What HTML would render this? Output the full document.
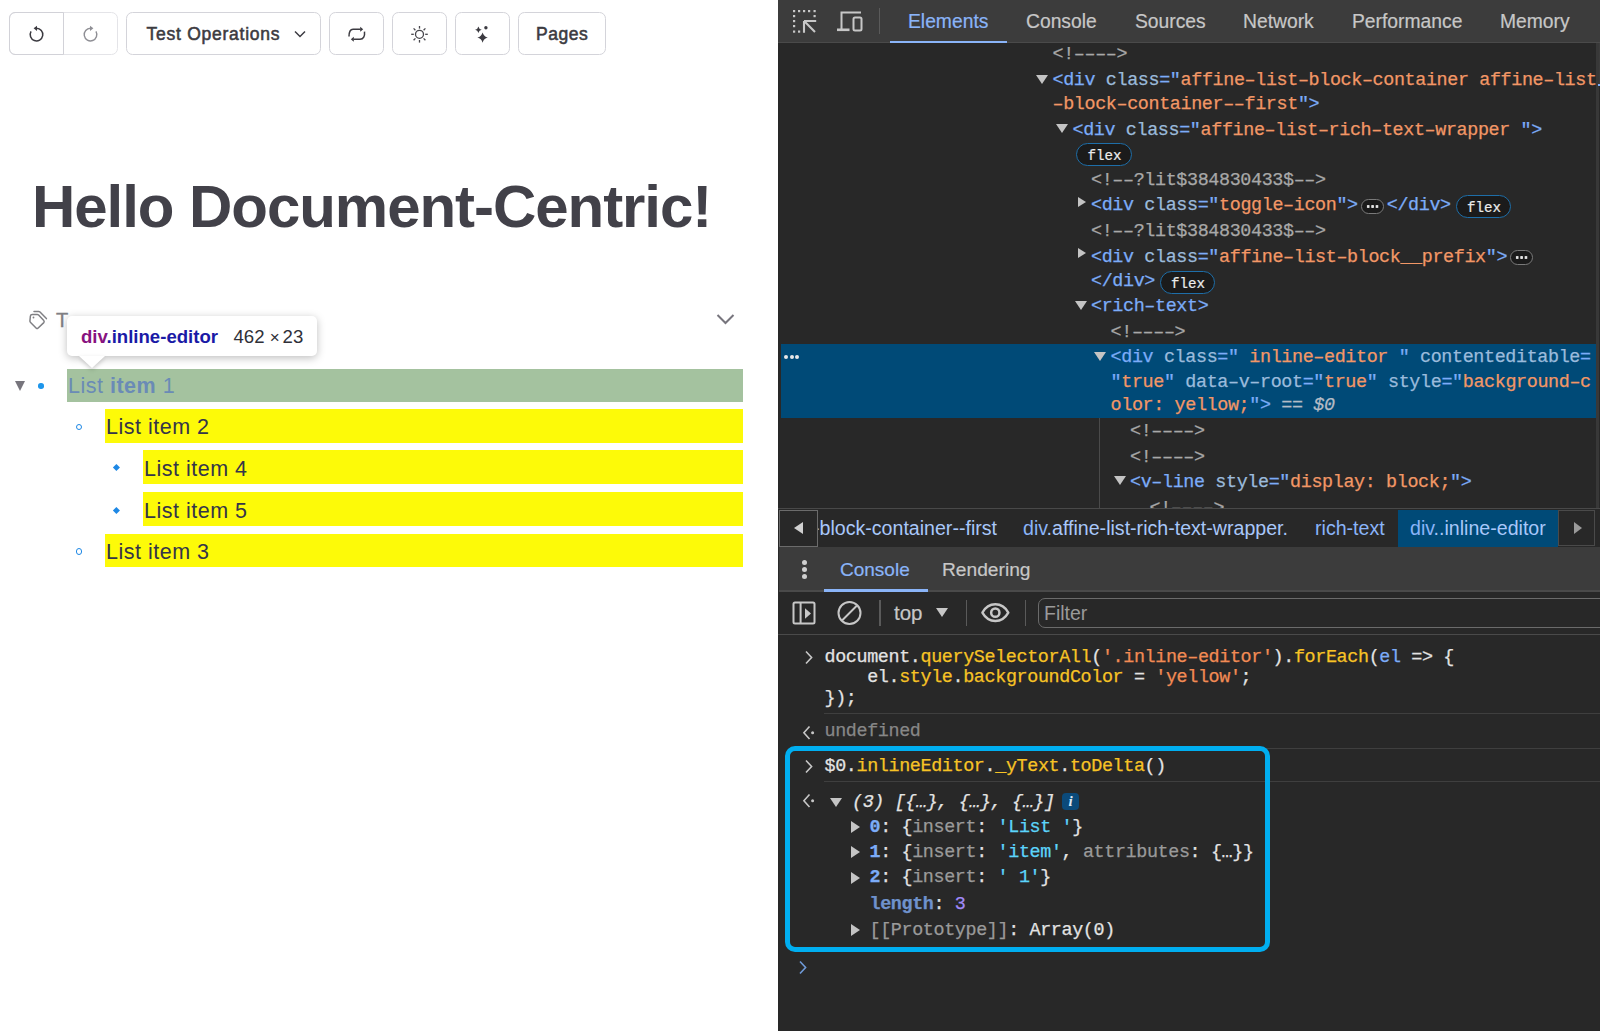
<!DOCTYPE html><html><head><meta charset="utf-8"><style>
*{margin:0;padding:0;box-sizing:border-box}
html,body{width:1600px;height:1031px;overflow:hidden;background:#fff}
body{position:relative;font-family:"Liberation Sans", sans-serif}
.abs{position:absolute}
.ml{position:absolute;font-family:"Liberation Mono", monospace;font-size:18.4px;letter-spacing:-0.368px;line-height:20px;white-space:pre;color:#e3e3e3;-webkit-text-stroke:0.25px currentColor}
.tg{color:#7cacf8} .an{color:#9bbbdc} .av{color:#f29766} .cm{color:#a8a8a8} .wt{color:#e3e3e3}
.yl{color:#f7c325} .or{color:#f28b54} .gy{color:#9a9a9a} .cy{color:#5cd5fb} .bl{color:#7cacf8} .ud{color:#878787} .sgy{color:#b4bcc6} .sgi{color:#b4bcc6;font-style:italic} .blb{color:#7cacf8;font-weight:bold} .lenc{color:#6f92cc;font-weight:bold} .pu{color:#a28bfa}
.btn{position:absolute;top:12px;height:43px;border:1.5px solid #d4d4da;border-radius:6.5px;background:#fff}
.tri-d{position:absolute;width:0;height:0;border-left:6.1px solid transparent;border-right:6.1px solid transparent;border-top:9.5px solid #c4c4c4}
.tri-r{position:absolute;width:0;height:0;border-top:5.6px solid transparent;border-bottom:5.6px solid transparent;border-left:8.8px solid #c4c4c4}
.badge{position:absolute;height:23px;border:1.8px solid #1e6ea8;border-radius:12px;background:#1b1b1b;font-family:"Liberation Mono", monospace;font-size:14.2px;line-height:21.4px;padding-top:1.5px;text-indent:1px;color:#ececec;text-align:center;-webkit-text-stroke:0.2px #ececec}
.sep{position:absolute;height:1px;background:#3f3f3f}
.li{position:absolute;font-family:"Liberation Sans", sans-serif;font-size:21.5px;letter-spacing:0.5px;color:#35343a;white-space:pre}
</style></head><body>
<div class="abs" style="left:0;top:0;width:778px;height:1031px;background:#fff"></div>
<div class="btn" style="left:9px;width:109px;border-color:#e4e4e8"></div><div class="abs" style="left:9px;top:12px;width:55px;height:43px;border:1.5px solid #d2d2d8;border-radius:6px 0 0 6px"></div><svg class="abs" style="left:26px;top:22px" width="24" height="24" viewBox="0 0 24 24"><path d="M5.04 9.45 A6.3 6.3 0 1 0 10.5 6.3" fill="none" stroke="#3b3a40" stroke-width="1.5"/><path d="M7.6 6.3 L11 3.7 L11 8.9 Z" fill="#3b3a40"/></svg><svg class="abs" style="left:80px;top:22px" width="24" height="24" viewBox="0 0 24 24"><path d="M15.96 9.45 A6.3 6.3 0 1 1 10.5 6.3" fill="none" stroke="#8f8f95" stroke-width="1.4"/><path d="M13.4 6.3 L10 3.7 L10 8.9 Z" fill="#8f8f95"/></svg><div class="btn" style="left:126px;width:195px"></div><div class="abs" style="left:146.5px;top:24px;font-size:17.5px;font-weight:normal;-webkit-text-stroke:0.55px #3c3b41;color:#3c3b41;letter-spacing:0.75px;white-space:pre">Test Operations</div><svg class="abs" style="left:293px;top:28.5px" width="14" height="10" viewBox="0 0 14 10"><path d="M2 2.5 L7 7.5 L12 2.5" fill="none" stroke="#3c3b41" stroke-width="1.5"/></svg><div class="btn" style="left:329px;width:55px"></div><svg class="abs" style="left:340px;top:18px" width="32" height="32" viewBox="0 0 32 32"><g fill="none" stroke="#3c3b41" stroke-width="1.5"><path d="M9 18.6 C9 14 10 11.3 13 11.3 H20.5"/><path d="M24.5 13.7 C25 18 23.5 21.3 20 21.3 H13.5"/></g><path d="M20.2 8.8 L23.2 11.3 L20.2 13.8 Z" fill="#3c3b41"/><path d="M13.8 18.8 L10.8 21.3 L13.8 23.8 Z" fill="#3c3b41"/></svg><div class="btn" style="left:392px;width:55px"></div><svg class="abs" style="left:404px;top:18px" width="32" height="32" viewBox="0 0 32 32"><circle cx="15.5" cy="16.3" r="4" fill="none" stroke="#46454b" stroke-width="1.3"/><g stroke="#46454b" stroke-width="1.3"><path d="M15.5 8 V10.6"/><path d="M15.5 22 V24.6"/><path d="M7.2 16.3 H9.8"/><path d="M21.2 16.3 H23.8"/><path d="M9.6 10.4 L11.4 12.2"/><path d="M19.6 20.4 L21.4 22.2"/><path d="M9.6 22.2 L11.4 20.4"/><path d="M19.6 12.2 L21.4 10.4"/></g></svg><div class="btn" style="left:455px;width:55px"></div><svg class="abs" style="left:466px;top:18px" width="32" height="32" viewBox="0 0 32 32"><path d="M16.6 14.400000000000002 Q17.74 18.46 21.8 19.6 Q17.74 20.74 16.6 24.8 Q15.46 20.74 11.400000000000002 19.6 Q15.46 18.46 16.6 14.400000000000002 Z" fill="#3c3b41"/><path d="M12.4 8.5 Q12.99 11.21 15.7 11.8 Q12.99 12.39 12.4 15.100000000000001 Q11.81 12.39 9.100000000000001 11.8 Q11.81 11.21 12.4 8.5 Z" fill="#3c3b41"/><circle cx="19.9" cy="9.8" r="1.7" fill="#3c3b41"/></svg><div class="btn" style="left:518px;width:88px"></div><div class="abs" style="left:536px;top:24px;font-size:17.5px;font-weight:normal;-webkit-text-stroke:0.55px #3c3b41;color:#3c3b41;letter-spacing:0.55px;white-space:pre">Pages</div><div class="abs" style="left:32px;top:172px;font-size:60px;font-weight:bold;color:#424149;letter-spacing:-1.05px;white-space:pre;line-height:70px">Hello Document-Centric!</div>
<svg class="abs" style="left:20px;top:300px" width="40" height="40" viewBox="0 0 40 40"><path d="M12.2 14.4 H17.2 Q18 14.4 18.6 15 L23.8 20.6 Q24.6 21.7 23.8 22.6 L17.9 28.2 Q17.1 28.9 16.3 28.2 L10.6 22.5 Q9.9 21.8 9.9 21 L10.4 16 Q10.6 14.4 12.2 14.4 Z" fill="none" stroke="#808084" stroke-width="1.5" stroke-linejoin="round"/><path d="M14 11.4 H18.6 Q19.4 11.4 20 12 L26.4 18.6" fill="none" stroke="#808084" stroke-width="1.5" stroke-linecap="round"/><circle cx="13.5" cy="17.5" r="0.9" fill="#808084"/></svg><div class="abs" style="left:56px;top:309px;font-size:20px;color:#808084;-webkit-text-stroke:0.35px #808084">T</div><svg class="abs" style="left:714px;top:310px" width="24" height="20" viewBox="0 0 24 20"><path d="M3.5 5 L11.5 13 L19.5 5" fill="none" stroke="#77757d" stroke-width="2"/></svg>
<div class="abs" style="left:67px;top:369px;width:676px;height:33px;background:#a4c29f"></div><div class="abs" style="left:105px;top:409px;width:638px;height:33.5px;background:#fdfa08"></div><div class="abs" style="left:143px;top:450px;width:600px;height:34px;background:#fdfa08"></div><div class="abs" style="left:143px;top:492px;width:600px;height:34px;background:#fdfa08"></div><div class="abs" style="left:105px;top:534px;width:638px;height:33px;background:#fdfa08"></div>
<div class="li" style="left:68px;top:374.0px;line-height:24px;color:#6a8bb6">List <b style="letter-spacing:0.5px">item</b> 1</div><div class="li" style="left:106px;top:415.2px;line-height:24px;color:#34344a">List item 2</div><div class="li" style="left:144px;top:456.5px;line-height:24px;color:#34344a">List item 4</div><div class="li" style="left:144px;top:498.5px;line-height:24px;color:#34344a">List item 5</div><div class="li" style="left:106px;top:539.5px;line-height:24px;color:#34344a">List item 3</div><div class="tri-d" style="left:15px;top:381px;border-left-width:5.5px;border-right-width:5.5px;border-top:10px solid #77757d"></div><div class="abs" style="left:38px;top:383px;width:5.5px;height:5.5px;border-radius:50%;background:#1e96eb"></div><div class="abs" style="left:75.5px;top:423.5px;width:6.5px;height:6.5px;border-radius:50%;border:1.4px solid #1e88e5"></div><div class="abs" style="left:75.5px;top:548.0px;width:6.5px;height:6.5px;border-radius:50%;border:1.4px solid #1e88e5"></div><div class="abs" style="left:114.35px;top:465.1px;width:4.8px;height:4.8px;transform:rotate(45deg);background:#1e88e5"></div><div class="abs" style="left:114.35px;top:507.6px;width:4.8px;height:4.8px;transform:rotate(45deg);background:#1e88e5"></div><div class="abs" style="left:67px;top:316px;width:250px;height:40px;background:#fff;border-radius:5px;box-shadow:0 2px 8px rgba(0,0,0,0.26)"></div><div class="abs" style="left:79px;top:355.5px;width:0;height:0;border-left:13.5px solid transparent;border-right:13.5px solid transparent;border-top:12.5px solid #fff;filter:drop-shadow(0 2px 2px rgba(0,0,0,0.2))"></div><div class="abs" style="left:81px;top:325px;font-size:18.6px;font-weight:bold;white-space:pre;line-height:24px"><span style="color:#881280">div</span><span style="color:#1a1aa6">.inline-editor</span></div><div class="abs" style="left:233.5px;top:325px;font-size:18.6px;color:#303038;white-space:pre;line-height:24px">462</div><div class="abs" style="left:269.8px;top:325.5px;font-size:17px;color:#303038;white-space:pre;line-height:24px">×</div><div class="abs" style="left:282.6px;top:325px;font-size:18.6px;color:#303038;white-space:pre;line-height:24px">23</div>
<div class="abs" style="left:778px;top:0;width:822px;height:1031px;background:#282828"></div>
<div class="abs" style="left:778px;top:0;width:822px;height:42px;background:#3c3c3c"></div><div class="abs" style="left:778px;top:42px;width:822px;height:1px;background:#4a4a4a"></div><div class="abs" style="left:890px;top:40.5px;width:117px;height:2.5px;background:#8ab4f8"></div><svg class="abs" style="left:790px;top:8px" width="30" height="28" viewBox="0 0 30 28"><g fill="#c7c7c7"><rect x="3" y="2" width="2.2" height="2.2"/><rect x="8" y="2" width="2.2" height="2.2"/><rect x="13" y="2" width="2.2" height="2.2"/><rect x="18" y="2" width="2.2" height="2.2"/><rect x="23.5" y="2" width="2.2" height="2.2"/><rect x="3" y="7" width="2.2" height="2.2"/><rect x="3" y="12" width="2.2" height="2.2"/><rect x="3" y="17" width="2.2" height="2.2"/><rect x="3" y="22.5" width="2.2" height="2.2"/><rect x="8" y="22.5" width="2.2" height="2.2"/><rect x="23.5" y="7" width="2.2" height="2.2"/></g><path d="M14 13 H26.2 M14 13 V24.7 M14.6 13.6 L25 24" stroke="#c7c7c7" stroke-width="2.1" fill="none"/></svg><svg class="abs" style="left:835px;top:9px" width="30" height="26" viewBox="0 0 30 26"><path d="M5.5 3.5 H26 M6.5 3.5 V20" stroke="#c7c7c7" stroke-width="2" fill="none"/><rect x="2" y="19.5" width="12.5" height="2.6" fill="#c7c7c7"/><rect x="18.5" y="8.5" width="8" height="13" rx="1.5" stroke="#c7c7c7" stroke-width="2" fill="none"/></svg><div class="abs" style="left:878.5px;top:8px;width:1.5px;height:26px;background:#5a5a5a"></div><div class="abs" style="left:908px;top:10px;font-size:19.3px;line-height:24px;color:#8ab4f8;white-space:pre;-webkit-text-stroke:0.2px #8ab4f8">Elements</div><div class="abs" style="left:1026px;top:10px;font-size:19.3px;line-height:24px;color:#c7c7c7;white-space:pre;-webkit-text-stroke:0.2px #c7c7c7">Console</div><div class="abs" style="left:1135px;top:10px;font-size:19.3px;line-height:24px;color:#c7c7c7;white-space:pre;-webkit-text-stroke:0.2px #c7c7c7">Sources</div><div class="abs" style="left:1243px;top:10px;font-size:19.3px;line-height:24px;color:#c7c7c7;white-space:pre;-webkit-text-stroke:0.2px #c7c7c7">Network</div><div class="abs" style="left:1352px;top:10px;font-size:19.3px;line-height:24px;color:#c7c7c7;white-space:pre;-webkit-text-stroke:0.2px #c7c7c7">Performance</div><div class="abs" style="left:1500px;top:10px;font-size:19.3px;line-height:24px;color:#c7c7c7;white-space:pre;-webkit-text-stroke:0.2px #c7c7c7">Memory</div>
<div class="abs" style="left:780.5px;top:343.75px;width:815px;height:74.25px;background:#004a77"></div><div class="abs" style="left:783.9px;top:355px;width:4px;height:4px;border-radius:50%;background:#e8e8e8"></div><div class="abs" style="left:789.5px;top:355px;width:4px;height:4px;border-radius:50%;background:#e8e8e8"></div><div class="abs" style="left:795.3px;top:355px;width:4px;height:4px;border-radius:50%;background:#e8e8e8"></div><div class="abs" style="left:1099px;top:418px;width:1px;height:90px;background:#4a4a4a"></div><div class="ml" style="left:1052.5px;top:44.86px;"><span class="cm">&lt;!––––&gt;</span></div>
<div class="tri-d" style="left:1036px;top:74.8px"></div><div class="ml" style="left:1052.5px;top:71.36px;"><span class="tg">&lt;div</span> <span class="an">class</span><span class="tg">="</span><span class="av">affine–list–block–container affine–list</span></div>
<div class="ml" style="left:1052.5px;top:94.66px;"><span class="av">–block–container––first</span><span class="tg">"&gt;</span></div>
<div class="tri-d" style="left:1055.6px;top:124.4px"></div><div class="ml" style="left:1072.5px;top:120.96px;"><span class="tg">&lt;div</span> <span class="an">class</span><span class="tg">="</span><span class="av">affine–list–rich–text–wrapper </span><span class="tg">"&gt;</span></div>
<div class="badge" style="left:1076px;top:143px;width:56px">flex</div><div class="ml" style="left:1091px;top:170.96px;"><span class="cm">&lt;!––?lit$384830433$––&gt;</span></div>
<div class="tri-r" style="left:1077.5px;top:196.8px"></div><div class="ml" style="left:1091px;top:196.36px;"><span class="tg">&lt;div</span> <span class="an">class</span><span class="tg">="</span><span class="av">toggle–icon</span><span class="tg">"&gt;</span><span style="display:inline-block;width:29px"></span><span class="tg">&lt;/div&gt;</span></div>
<div class="abs" style="left:1361px;top:198.5px;width:22.5px;height:15.5px;border:1.5px solid #7a7a7a;border-radius:9px;background:#1b1b1b"></div><div class="abs" style="left:1365.5px;top:204.8px;width:13px;height:3px;background:radial-gradient(circle,#e3e3e3 1.3px,transparent 1.5px) 0 0/4.4px 3px repeat-x"></div><div class="badge" style="left:1456px;top:195px;width:55px">flex</div><div class="ml" style="left:1091px;top:221.96px;"><span class="cm">&lt;!––?lit$384830433$––&gt;</span></div>
<div class="tri-r" style="left:1077.5px;top:248.4px"></div><div class="ml" style="left:1091px;top:247.96px;"><span class="tg">&lt;div</span> <span class="an">class</span><span class="tg">="</span><span class="av">affine–list–block__prefix</span><span class="tg">"&gt;</span></div>
<div class="abs" style="left:1510px;top:249.5px;width:22.5px;height:15.5px;border:1.5px solid #7a7a7a;border-radius:9px;background:#1b1b1b"></div><div class="abs" style="left:1514.5px;top:255.8px;width:13px;height:3px;background:radial-gradient(circle,#e3e3e3 1.3px,transparent 1.5px) 0 0/4.4px 3px repeat-x"></div><div class="ml" style="left:1091px;top:271.76px;"><span class="tg">&lt;/div&gt;</span></div>
<div class="badge" style="left:1160px;top:271px;width:55px">flex</div><div class="tri-d" style="left:1075px;top:300.8px"></div><div class="ml" style="left:1091px;top:297.36px;"><span class="tg">&lt;rich–text&gt;</span></div>
<div class="ml" style="left:1110.6px;top:322.56px;"><span class="cm">&lt;!––––&gt;</span></div>
<div class="tri-d" style="left:1094px;top:351.8px"></div><div class="ml" style="left:1110.6px;top:348.36px;"><span class="tg">&lt;div</span> <span class="an">class</span><span class="tg">="</span><span class="av"> inline–editor </span><span class="tg">"</span> <span class="an">contenteditable</span><span class="tg">=</span></div>
<div class="ml" style="left:1110.6px;top:372.76px;"><span class="tg">"</span><span class="av">true</span><span class="tg">"</span> <span class="an">data–v–root</span><span class="tg">="</span><span class="av">true</span><span class="tg">"</span> <span class="an">style</span><span class="tg">="</span><span class="av">background–c</span></div>
<div class="ml" style="left:1110.6px;top:396.46px;"><span class="av">olor: yellow;</span><span class="tg">"&gt;</span> <span class="sgy">== </span><span class="sgi">$0</span></div>
<div class="ml" style="left:1130px;top:422.16px;"><span class="cm">&lt;!––––&gt;</span></div>
<div class="ml" style="left:1130px;top:447.76px;"><span class="cm">&lt;!––––&gt;</span></div>
<div class="tri-d" style="left:1114px;top:476.4px"></div><div class="ml" style="left:1130px;top:472.96px;"><span class="tg">&lt;v–line</span> <span class="an">style</span><span class="tg">="</span><span class="av">display: block;</span><span class="tg">"&gt;</span></div>
<div class="ml" style="left:1149.5px;top:498.76px;"><span class="cm">&lt;!––––&gt;</span></div>
<div class="abs" style="left:1596px;top:43px;width:2.5px;height:465px;background:#383838"></div><div class="abs" style="left:1598.5px;top:43px;width:1.5px;height:43px;background:#3c3c3c"></div><div class="abs" style="left:1597.5px;top:84px;width:2.5px;height:2.4px;background:#7cacf8"></div>
<div class="abs" style="left:778px;top:508px;width:822px;height:39px;background:#282828;border-top:1.5px solid #494949"></div><div class="abs" style="left:779px;top:510px;width:39px;height:37px;border:1.5px solid #6b6b6b;background:#282828"></div><div class="abs" style="left:794px;top:522px;width:0;height:0;border-top:6px solid transparent;border-bottom:6px solid transparent;border-right:9px solid #d0d0d0"></div><div class="abs" style="left:818px;top:510px;width:740px;height:37px;overflow:hidden"><div class="abs" style="left:-5px;top:6px;font-size:19.6px;line-height:24px;white-space:pre;color:#a8c7fa">-block-container--first</div><div class="abs" style="left:205px;top:6px;font-size:19.6px;line-height:24px;white-space:pre;color:#a8c7fa"><span style="color:#8ab4f8">div</span>.affine-list-rich-text-wrapper.</div><div class="abs" style="left:497px;top:6px;font-size:19.6px;line-height:24px;white-space:pre;color:#8ab4f8">rich-text</div></div><div class="abs" style="left:1398px;top:509.5px;width:160px;height:37.5px;background:#004a77"></div><div class="abs" style="left:1410px;top:516px;font-size:19.6px;line-height:24px;white-space:pre;color:#a8c7fa"><span style="color:#8ab4f8">div</span>..inline-editor</div><div class="abs" style="left:1558px;top:510px;width:37px;height:36px;border:1.5px solid #4a4a4a;background:#282828"></div><div class="abs" style="left:1574px;top:522px;width:0;height:0;border-top:6px solid transparent;border-bottom:6px solid transparent;border-left:8px solid #9a9a9a"></div>
<div class="abs" style="left:778px;top:547px;width:822px;height:43px;background:#3c3c3c"></div><div class="abs" style="left:778px;top:590px;width:822px;height:2px;background:#4a4a4a"></div><div class="abs" style="left:824px;top:589px;width:103.5px;height:3px;background:#8ab4f8"></div><div class="abs" style="left:778px;top:547px;width:1px;height:87px;background:#2a2a2a"></div><div class="abs" style="left:801.7px;top:559.6999999999999px;width:5.2px;height:5.2px;border-radius:50%;background:#cfcfcf"></div><div class="abs" style="left:801.7px;top:567.0px;width:5.2px;height:5.2px;border-radius:50%;background:#cfcfcf"></div><div class="abs" style="left:801.7px;top:574.1px;width:5.2px;height:5.2px;border-radius:50%;background:#cfcfcf"></div><div class="abs" style="left:840px;top:558px;font-size:19px;line-height:24px;color:#8ab4f8;white-space:pre;-webkit-text-stroke:0.2px #8ab4f8">Console</div><div class="abs" style="left:942px;top:558px;font-size:19.2px;line-height:24px;color:#c7c7c7;white-space:pre;-webkit-text-stroke:0.2px #c7c7c7">Rendering</div>
<div class="abs" style="left:778px;top:633.5px;width:822px;height:1.5px;background:#4a4a4a"></div><svg class="abs" style="left:790px;top:598.8px" width="28" height="30" viewBox="0 0 28 30"><rect x="3.5" y="3.5" width="21" height="21" rx="1.5" fill="none" stroke="#c7c7c7" stroke-width="2"/><path d="M10.6 4 V24" stroke="#c7c7c7" stroke-width="2"/><path d="M15 9.2 L21 14.5 L15 19.8 Z" fill="#c7c7c7"/></svg><svg class="abs" style="left:835px;top:598px" width="30" height="30" viewBox="0 0 30 30"><circle cx="14.5" cy="15" r="11" fill="none" stroke="#c7c7c7" stroke-width="2"/><path d="M7 22.5 L22 7.5" stroke="#c7c7c7" stroke-width="2"/></svg><div class="abs" style="left:879px;top:600px;width:1.5px;height:26px;background:#5a5a5a"></div><div class="abs" style="left:894px;top:601px;font-size:20.5px;line-height:24px;color:#c7c7c7;-webkit-text-stroke:0.2px #c7c7c7">top</div><div class="abs" style="left:936px;top:607.5px;width:0;height:0;border-left:6px solid transparent;border-right:6px solid transparent;border-top:9.5px solid #c7c7c7"></div><div class="abs" style="left:965.5px;top:600px;width:1.5px;height:26px;background:#5a5a5a"></div><svg class="abs" style="left:979px;top:602px" width="32" height="24" viewBox="0 0 32 24"><path d="M3.4 10.6 C9.5 -0.5 23.2 -0.5 29.3 10.6 C23.2 21.7 9.5 21.7 3.4 10.6Z" fill="none" stroke="#c7c7c7" stroke-width="2.4" stroke-linejoin="round"/><circle cx="16.3" cy="10.65" r="4.15" fill="none" stroke="#c7c7c7" stroke-width="2.5"/></svg><div class="abs" style="left:1024.5px;top:600px;width:1.5px;height:26px;background:#5a5a5a"></div><div class="abs" style="left:1038px;top:598px;width:580px;height:30px;border:1.5px solid #6b6b6b;border-radius:7px"></div><div class="abs" style="left:1044px;top:601px;font-size:19.5px;line-height:24px;color:#9a9a9a">Filter</div>
<svg class="abs" style="left:804px;top:650px" width="10" height="15" viewBox="0 0 10 15"><path d="M2 1.5 L7.6 7.5 L2 13.5" fill="none" stroke="#c7c7c7" stroke-width="1.6"/></svg><div class="ml" style="left:824.5px;top:647.56px;"><span class="wt">document.</span><span class="yl">querySelectorAll</span><span class="wt">(</span><span class="or">'.inline–editor'</span><span class="wt">)</span><span class="wt">.</span><span class="yl">forEach</span><span class="wt">(</span><span class="bl">el</span><span class="wt"> =&gt; {</span></div>
<div class="ml" style="left:824.5px;top:667.86px;"><span class="wt">    el.</span><span class="yl">style</span><span class="wt">.</span><span class="yl">backgroundColor</span><span class="wt"> = </span><span class="or">'yellow'</span><span class="wt">;</span></div>
<div class="ml" style="left:824.5px;top:688.76px;"><span class="wt">});</span></div>
<div class="sep" style="left:824px;top:713px;width:776px"></div><svg class="abs" style="left:801.5px;top:724.5px" width="16" height="16" viewBox="0 0 16 16"><path d="M7.5 1.5 L1.9 7.8 L7.5 14" fill="none" stroke="#c7c7c7" stroke-width="1.6"/><circle cx="10.6" cy="7.8" r="1.5" fill="#c7c7c7"/></svg><div class="ml" style="left:824.5px;top:722.16px;"><span class="ud">undefined</span></div>
<div class="sep" style="left:824px;top:747.5px;width:776px"></div><svg class="abs" style="left:804px;top:759px" width="10" height="15" viewBox="0 0 10 15"><path d="M2 1.5 L7.6 7.5 L2 13.5" fill="none" stroke="#c7c7c7" stroke-width="1.6"/></svg><div class="ml" style="left:824.5px;top:756.66px;"><span class="wt">$0.</span><span class="yl">inlineEditor</span><span class="wt">.</span><span class="yl">_yText</span><span class="wt">.</span><span class="yl">toDelta</span><span class="wt">()</span></div>
<div class="sep" style="left:824px;top:781px;width:776px"></div><svg class="abs" style="left:801.5px;top:792.7px" width="16" height="16" viewBox="0 0 16 16"><path d="M7.5 1.5 L1.9 7.8 L7.5 14" fill="none" stroke="#c7c7c7" stroke-width="1.6"/><circle cx="10.6" cy="7.8" r="1.5" fill="#c7c7c7"/></svg><div class="tri-d" style="left:829.5px;top:798px;border-top-width:9.5px"></div><div class="ml" style="left:852px;top:792.56px;font-style:italic"><span class="wt">(3) [{…}, {…}, {…}]</span></div>
<div class="abs" style="left:1062px;top:793px;width:17px;height:17px;border-radius:4px;background:#0b4a7a;color:#dfe8f5;font-family:'Liberation Serif',serif;font-style:italic;font-weight:bold;font-size:15px;line-height:17px;text-align:center">i</div><div class="tri-r" style="left:851px;top:821.4px;border-top-width:6px;border-bottom-width:6px;border-left-width:9.5px"></div><div class="ml" style="left:869.5px;top:818.06px;"><span class="blb">0</span><span class="wt">: {</span><span class="gy">insert</span><span class="wt">: </span><span class="cy">'List '</span><span class="wt">}</span></div>
<div class="tri-r" style="left:851px;top:846.4px;border-top-width:6px;border-bottom-width:6px;border-left-width:9.5px"></div><div class="ml" style="left:869.5px;top:843.26px;"><span class="blb">1</span><span class="wt">: {</span><span class="gy">insert</span><span class="wt">: </span><span class="cy">'item'</span><span class="wt">, </span><span class="gy">attributes</span><span class="wt">: {…}}</span></div>
<div class="tri-r" style="left:851px;top:872.1px;border-top-width:6px;border-bottom-width:6px;border-left-width:9.5px"></div><div class="ml" style="left:869.5px;top:868.46px;"><span class="blb">2</span><span class="wt">: {</span><span class="gy">insert</span><span class="wt">: </span><span class="cy">' 1'</span><span class="wt">}</span></div>
<div class="ml" style="left:869.5px;top:895.06px;"><span class="lenc">length</span><span class="wt">: </span><span class="pu">3</span></div>
<div class="tri-r" style="left:851px;top:924.4px;border-top-width:6px;border-bottom-width:6px;border-left-width:9.5px"></div><div class="ml" style="left:869.5px;top:920.76px;"><span class="gy">[[Prototype]]</span><span class="wt">: Array(0)</span></div>
<div class="abs" style="left:785px;top:746px;width:485px;height:206px;border:5px solid #00aef0;border-radius:10px"></div><svg class="abs" style="left:798.3px;top:959.8px" width="10" height="15" viewBox="0 0 10 15"><path d="M2 1.5 L7.6 7.5 L2 13.5" fill="none" stroke="#6f9ad8" stroke-width="1.6"/></svg></body></html>
